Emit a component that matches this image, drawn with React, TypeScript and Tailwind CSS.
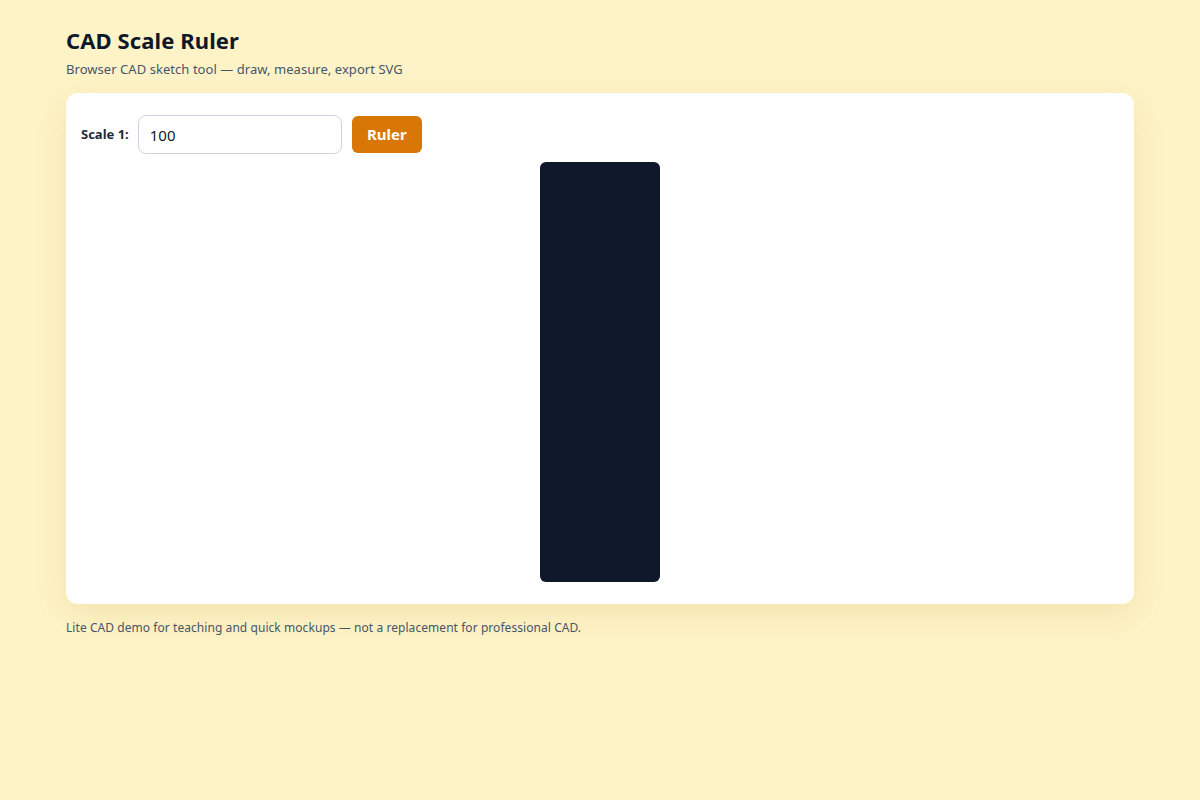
export default function App() {
  return (
    <div
      className="min-h-screen bg-[#fef3c7] px-[66px] pt-[26px] text-[#0f172a]"
      style={{ fontFamily: '"Noto Sans", "Open Sans", sans-serif' }}
    >
      <h1 className="text-[22px] font-bold leading-[28px] tracking-[0.1px]">CAD Scale Ruler</h1>
      <p className="mt-[6px] text-[13px] leading-[18px] tracking-[0.05px] text-[#475569]">
        Browser CAD sketch tool — draw, measure, export SVG
      </p>

      <section className="mt-[15px] rounded-xl bg-white px-[15px] py-[22px] shadow-[0_10px_30px_rgba(180,140,40,0.15)]">
        <div className="flex items-center gap-[9px]">
          <label className="text-[13px] font-bold text-[#1e293b]">Scale 1:</label>
          <input
            defaultValue="100"
            className="h-[39px] w-[204px] rounded-lg border border-[#cbd5e1] px-[11px] text-[15px] text-[#0f172a] outline-none"
          />
          <button className="ml-[1px] h-[37px] w-[70px] rounded-md bg-[#d97706] text-[15px] font-bold text-white">
            Ruler
          </button>
        </div>
        <div className="mt-[8px] flex justify-center">
          <div className="h-[420px] w-[120px] rounded-md bg-[#0f172a]" />
        </div>
      </section>

      <p className="mt-[16px] text-[12px] leading-[16px] tracking-[0.06px] text-[#475569]">
        Lite CAD demo for teaching and quick mockups — not a replacement for professional CAD.
      </p>
    </div>
  );
}
